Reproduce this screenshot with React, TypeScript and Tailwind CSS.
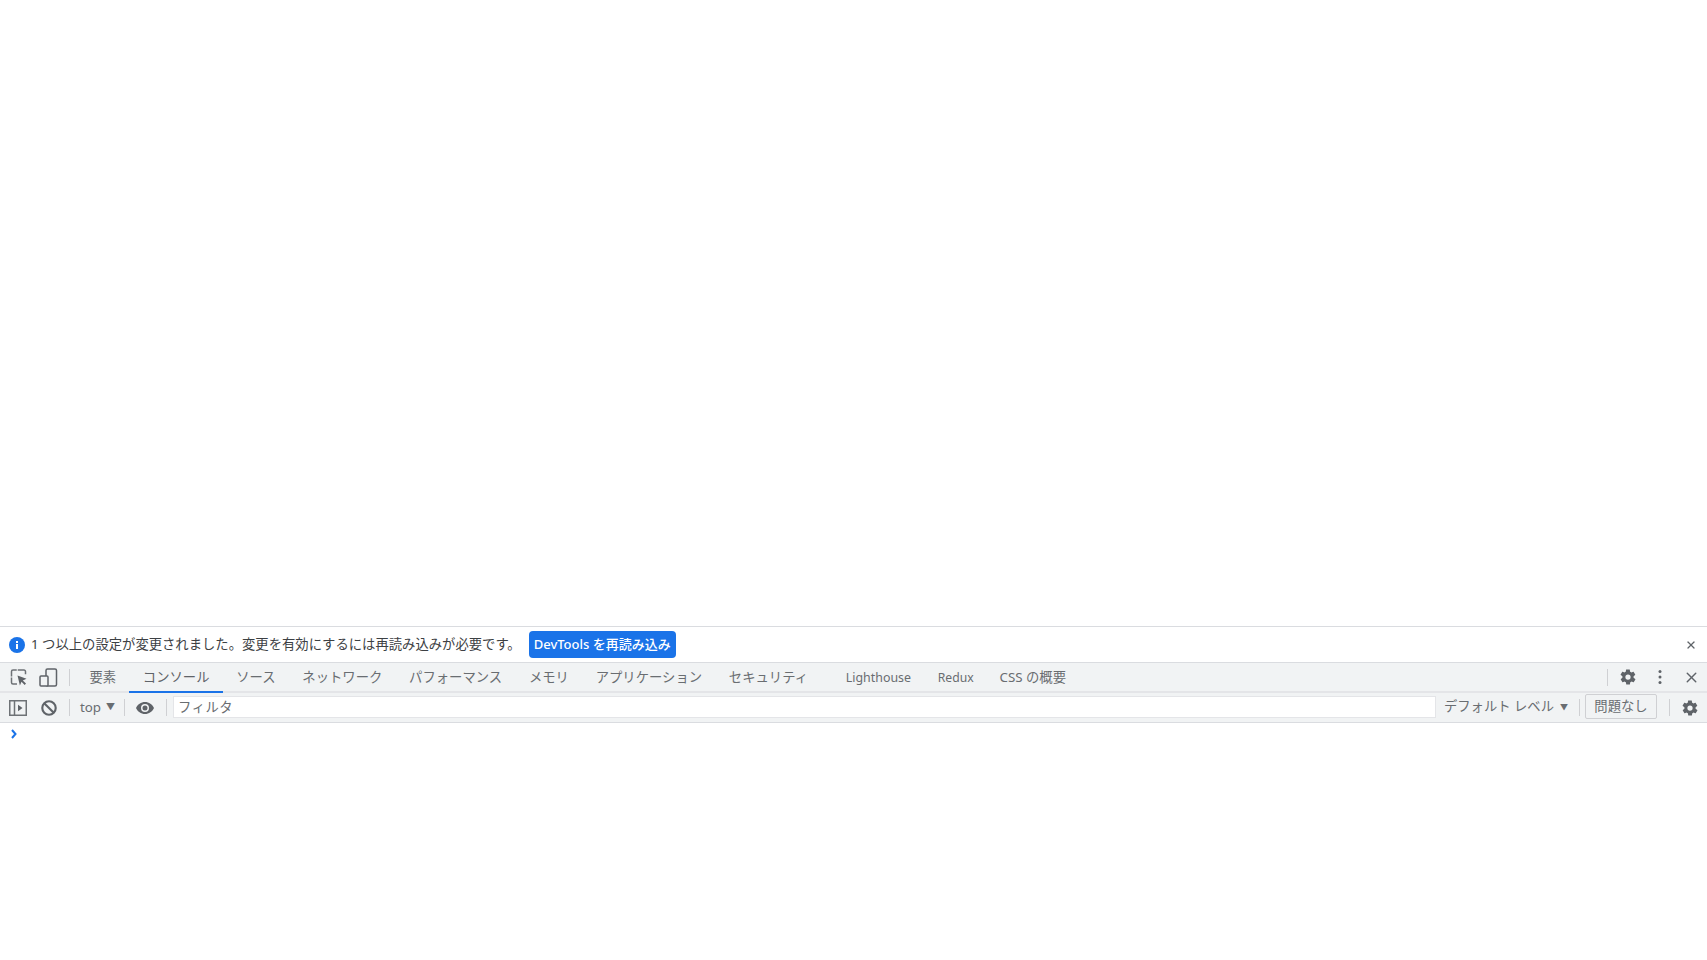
import { X } from 'lucide-react';

const tabs = ['要素', 'コンソール', 'ソース', 'ネットワーク', 'パフォーマンス', 'メモリ', 'アプリケーション', 'セキュリティ'];

function Divider({ className = '' }: { className?: string }) {
  return <div className={`w-px h-[17px] bg-[#cfd0d3] shrink-0 ${className}`} />;
}

function Gear() {
  return (
    <svg width="18" height="18" viewBox="0 0 24 24" fill="#5f6368">
      <path d="M19.4 13c.1-.3.1-.7.1-1s0-.7-.1-1l2.100-1.600c.2-.2.2-.4.1-.6l-2-3.500c-.1-.2-.4-.3-.6-.2l-2.500 1c-.5-.4-1.100-.7-1.700-1l-.4-2.700c0-.2-.2-.4-.5-.4h-4c-.2 0-.5.2-.5.4l-.4 2.700c-.6.3-1.200.6-1.700 1l-2.500-1c-.2-.1-.5 0-.6.2l-2 3.500c-.1.2-.1.5.1.600L4.600 11c-.1.3-.1.7-.1 1s0 .7.1 1l-2.100 1.600c-.2.2-.2.4-.1.600l2 3.500c.1.2.4.3.6.2l2.500-1c.5.4 1.100.7 1.700 1l.4 2.700c0 .2.2.4.5.4h4c.2 0 .5-.2.5-.4l.4-2.700c.6-.3 1.200-.6 1.700-1l2.500 1c.2.1.5 0 .6-.2l2-3.500c.1-.2.1-.5-.1-.6L19.400 13zM12 15.500a3.500 3.500 0 1 1 0-7 3.500 3.500 0 0 1 0 7z" />
    </svg>
  );
}

export default function App() {
  return (
    <div className="flex flex-col h-screen bg-white font-['Noto_Sans','Noto_Sans_CJK_JP',sans-serif] text-[13.33px] text-[#696d71] overflow-hidden">
      <div className="h-[626px] shrink-0 bg-white" />

      {/* infobar */}
      <div className="h-[37px] shrink-0 flex items-center border-y border-[#dadce0] bg-white pl-[9px] pr-[10px]">
        <svg width="16" height="16" viewBox="0 0 16 16" className="shrink-0">
          <circle cx="8" cy="8" r="8" fill="#1a73e8" />
          <rect x="7" y="7" width="2" height="5" fill="#fff" />
          <rect x="7" y="4" width="2" height="2" fill="#fff" />
        </svg>
        <span className="ml-[6px] text-[#3c4043] whitespace-nowrap leading-none">1 つ以上の設定が変更されました。変更を有効にするには再読み込みが必要です。</span>
        <button className="ml-[8px] h-[27px] w-[147px] rounded-[4px] bg-[#1a73e8] text-white text-[13px] font-medium whitespace-nowrap leading-none">DevTools を再読み込み</button>
        <X size={12} strokeWidth={2.5} className="ml-auto text-[#5f6368]" />
      </div>

      {/* main tab bar */}
      <div className="h-[30px] shrink-0 flex items-stretch bg-[#f1f3f4] border-b-2 border-[#e4e5e8]">
        <div className="flex items-center pl-[10px]">
          <svg width="18" height="18" viewBox="0 0 18 18" fill="none">
            <path d="M7 16H3a1.500 1.500 0 0 1-1.500-1.500v-11A1.500 1.500 0 0 1 3 2h11a1.500 1.500 0 0 1 1.500 1.500V7" stroke="#6e7276" strokeWidth="1.500" strokeDasharray="11 1" />
            <path d="M7.500 7.500l9 3.300-3.700 1.600 3.200 3.200-1.300 1.300-3.200-3.200-1.600 3.700z" fill="#5f6368" />
          </svg>
          <svg width="19" height="19" viewBox="0 0 19 19" fill="none" className="ml-[11px]">
            <rect x="7" y="1" width="10.500" height="17" rx="1.500" stroke="#5f6368" strokeWidth="1.500" />
            <rect x="1" y="8" width="8" height="10" rx="1" fill="#f1f3f4" stroke="#5f6368" strokeWidth="1.500" />
          </svg>
          <Divider className="ml-[11px]" />
        </div>
        <div className="flex items-stretch ml-[6px]">
          {tabs.map(t => (
            <div key={t} className={`flex items-center px-[13.4px] pt-[2px] whitespace-nowrap ${t === 'コンソール' ? 'text-[#5f6368] border-b-2 border-[#1a73e8] -mb-[2px]' : ''}`}>
              {t}
            </div>
          ))}
        </div>
        <div className="flex items-stretch ml-[11px]">
          <div className="flex items-center px-[13.4px] pt-[2px] text-[12.4px] whitespace-nowrap">Lighthouse</div>
          <div className="flex items-center px-[13.4px] pt-[2px] text-[12.2px] whitespace-nowrap">Redux</div>
          <div className="flex items-center pl-[12.4px] pr-[13.4px] pt-[2px] whitespace-nowrap">CSS の概要</div>
        </div>
        <div className="ml-auto flex items-center">
          <Divider />
          <div className="ml-[11px] flex"><Gear /></div>
          <svg width="4" height="16" viewBox="0 0 4 16" fill="#5f6368" className="ml-[21px]">
            <circle cx="2" cy="2.500" r="1.500" />
            <circle cx="2" cy="8" r="1.500" />
            <circle cx="2" cy="13.500" r="1.500" />
          </svg>
          <X size={17} strokeWidth={2} className="ml-[21px] mr-[7px] text-[#5f6368]" />
        </div>
      </div>

      {/* console toolbar */}
      <div className="h-[30px] shrink-0 flex items-center bg-[#f1f3f4] border-b border-[#dadce0]">
        <svg width="18" height="16" viewBox="0 0 18 16" fill="none" className="ml-[9px]">
          <rect x="0.750" y="0.750" width="16.500" height="14.500" stroke="#6e7276" strokeWidth="1.500" />
          <path d="M5.500 1v14" stroke="#6e7276" strokeWidth="1.500" />
          <path d="M9 4.800 13.500 8 9 11.200z" fill="#5f6368" />
        </svg>
        <svg width="16" height="16" viewBox="0 0 15 15" fill="none" className="ml-[14px]">
          <circle cx="7.500" cy="7.500" r="6.300" stroke="#5f6368" strokeWidth="2" />
          <path d="M3 3l9 9" stroke="#5f6368" strokeWidth="2" />
        </svg>
        <Divider className="ml-[12px]" />
        <span className="ml-[10px] leading-none mt-[1px]">top</span>
        <span className="ml-[5px] text-[9px] leading-none -mt-[3px]">▼</span>
        <Divider className="ml-[9px]" />
        <svg width="18" height="12" viewBox="0 0 18 12" fill="#5f6368" className="ml-[11px]">
          <path d="M9 0C5 0 1.600 2.500 0 6c1.600 3.500 5 6 9 6s7.400-2.500 9-6c-1.600-3.500-5-6-9-6zm0 10a4 4 0 1 1 0-8 4 4 0 0 1 0 8zm0-6.500a2.500 2.500 0 1 0 0 5 2.500 2.500 0 0 0 0-5z" />
        </svg>
        <Divider className="ml-[12px]" />
        <div className="ml-[6px] flex-1 h-[22px] flex items-center bg-white border border-[#e4e5e8] pl-[4px] pt-[2px] leading-none tracking-[0.5px] -mt-px">フィルタ</div>
        <span className="ml-[8px] whitespace-nowrap leading-none -mt-[2px]">デフォルト レベル</span>
        <span className="ml-[6px] text-[8px] leading-none -mt-[2px]">▼</span>
        <Divider className="ml-[11px]" />
        <button className="ml-[5px] h-[25px] w-[72px] rounded-[2px] border border-[#cfd0d3] bg-[#f1f3f4] text-[#696d71] whitespace-nowrap leading-none -mt-[2px]">問題なし</button>
        <Divider className="ml-[12px]" />
        <div className="ml-[11px] mr-[8px] flex"><Gear /></div>
      </div>

      {/* prompt */}
      <div className="flex-1 bg-white pl-[11px] pt-[6px]">
        <svg width="6" height="10" viewBox="0 0 6 10" fill="none">
          <path d="M1 1l3.500 4L1 9" stroke="#1a73e8" strokeWidth="2" />
        </svg>
      </div>
    </div>
  );
}
